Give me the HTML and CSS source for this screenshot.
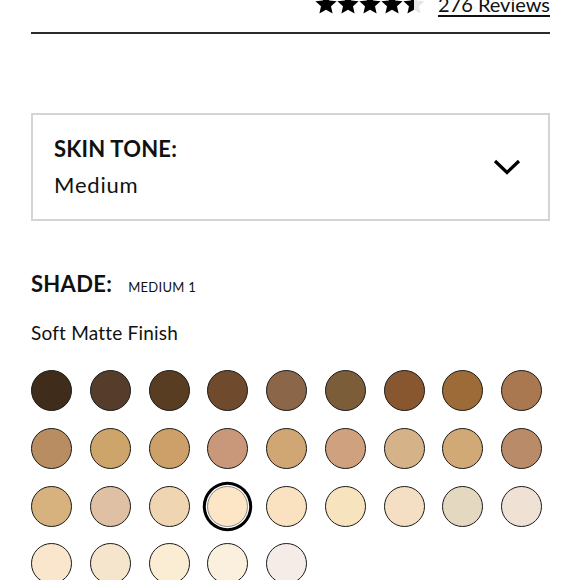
FILE: index.html
```html
<!DOCTYPE html>
<html lang="en">
<head>
    <meta charset="UTF-8">
    <meta name="viewport" content="width=device-width, initial-scale=1.0">
    <title>Shade Selector</title>
    <link rel="stylesheet" href="styles.css">
</head>
<body>

    <div class="page">
        <div class="rating">
            <div class="stars">
                <svg width="110" height="22" viewBox="0 0 110 22">
                    <defs>
                        <polygon id="star" points="11,0.5 14.2,7.4 21.6,8.2 16,13.2 17.6,20.6 11,16.8 4.4,20.6 6,13.2 0.4,8.2 7.8,7.4"/>
                        <linearGradient id="half" x1="0" x2="1" y1="0" y2="0">
                            <stop offset="0.52" stop-color="#000"/>
                            <stop offset="0.52" stop-color="#e6e6e6"/>
                        </linearGradient>
                    </defs>
                    <use href="#star" x="0" fill="#000"/>
                    <use href="#star" x="22" fill="#000"/>
                    <use href="#star" x="44" fill="#000"/>
                    <use href="#star" x="66" fill="#000"/>
                    <use href="#star" x="88" fill="url(#half)"/>
                </svg>
            </div>
            <a class="reviews" href="#">276 Reviews</a>
        </div>

        <div class="tone-select">
            <div class="tone-text">
                <div class="tone-label">SKIN TONE:</div>
                <div class="tone-value">Medium</div>
            </div>
            <svg class="chevron" width="28" height="16" viewBox="0 0 28 16">
                <path d="M2 2 L14 13.5 L26 2" fill="none" stroke="#000" stroke-width="3.2"/>
            </svg>
        </div>

        <div class="shade-head">
            <span class="shade-label">SHADE:</span>
            <span class="shade-name">MEDIUM 1</span>
        </div>

        <p class="finish">Soft Matte Finish</p>

        <div class="swatches" id="swatches"></div>
    </div>

    <script>
        var shades = [
            '#3f2c1b', '#563d2b', '#593d22', '#6f4a2d', '#8b6649', '#7b5d3a', '#885730', '#9c6b37', '#a97850',
            '#b98d62', '#cda56b', '#cca068', '#c9987a', '#cfa674', '#cfa17f', '#d6b288', '#d1a977', '#ba8b68',
            '#d7b17e', '#dfc0a4', '#efd5b1', '#fce6c6', '#fae1bf', '#f7e3bd', '#f5dfc4', '#e5d8c1', '#efe1d3',
            '#f9e6cd', '#f6e5cd', '#fbedd4', '#fbefdd', '#f5ece7'
        ];
        var selected = 21;
        var box = document.getElementById("swatches");
        shades.forEach(function(color, i) {
            var dot = document.createElement("button");
            dot.className = "swatch" + (i === selected ? " active" : "");
            dot.style.backgroundColor = color;
            box.appendChild(dot);
        });
    </script>

</body>
</html>
```

FILE: styles.css
```css
* {
    margin: 0;
    padding: 0;
    box-sizing: border-box;
}
body {
    font-family: Lato, "Open Sans", sans-serif;
    color: #111;
    background: #fff;
}
.page {
    padding: 0 30px 0 31px;
}
.rating {
    display: flex;
    justify-content: flex-end;
    align-items: center;
    gap: 13px;
    margin-top: -6px;
    height: 40px;
    border-bottom: 2px solid #2b2b2b;
    padding-bottom: 18px;
}
.stars svg {
    display: block;
}
.reviews {
    color: #111;
    font-size: 20px;
    text-decoration: underline;
    text-underline-offset: 3px;
}
.tone-select {
    margin-top: 79px;
    height: 108px;
    border: 2px solid #d4d4d4;
    display: flex;
    align-items: center;
    justify-content: space-between;
    padding: 0 27px 0 21px;
}
.tone-label {
    font-size: 22px;
    font-weight: 700;
    letter-spacing: 0.2px;
    line-height: 26px;
}
.tone-value {
    font-size: 22px;
    letter-spacing: 0.8px;
    line-height: 26px;
    margin-top: 10px;
}
.shade-head {
    margin-top: 49px;
    display: flex;
    align-items: baseline;
    gap: 16px;
}
.shade-label {
    font-size: 22px;
    font-weight: 700;
    letter-spacing: 0.3px;
}
.shade-name {
    font-size: 13px;
    letter-spacing: 0.3px;
}
.finish {
    margin-top: 24px;
    font-size: 19px;
    letter-spacing: 0.2px;
}
.swatches {
    margin-top: 26px;
    display: grid;
    grid-template-columns: repeat(9, 41px);
    column-gap: 17.75px;
    row-gap: 16.8px;
}
.swatch {
    width: 41px;
    height: 41px;
    border-radius: 50%;
    border: 1.6px solid #1a1a1a;
    cursor: pointer;
}
.swatch.active {
    border: 1px solid #8a8a8a;
    box-shadow: 0 0 0 1.2px #fff, 0 0 0 4.2px #000;
}
```
